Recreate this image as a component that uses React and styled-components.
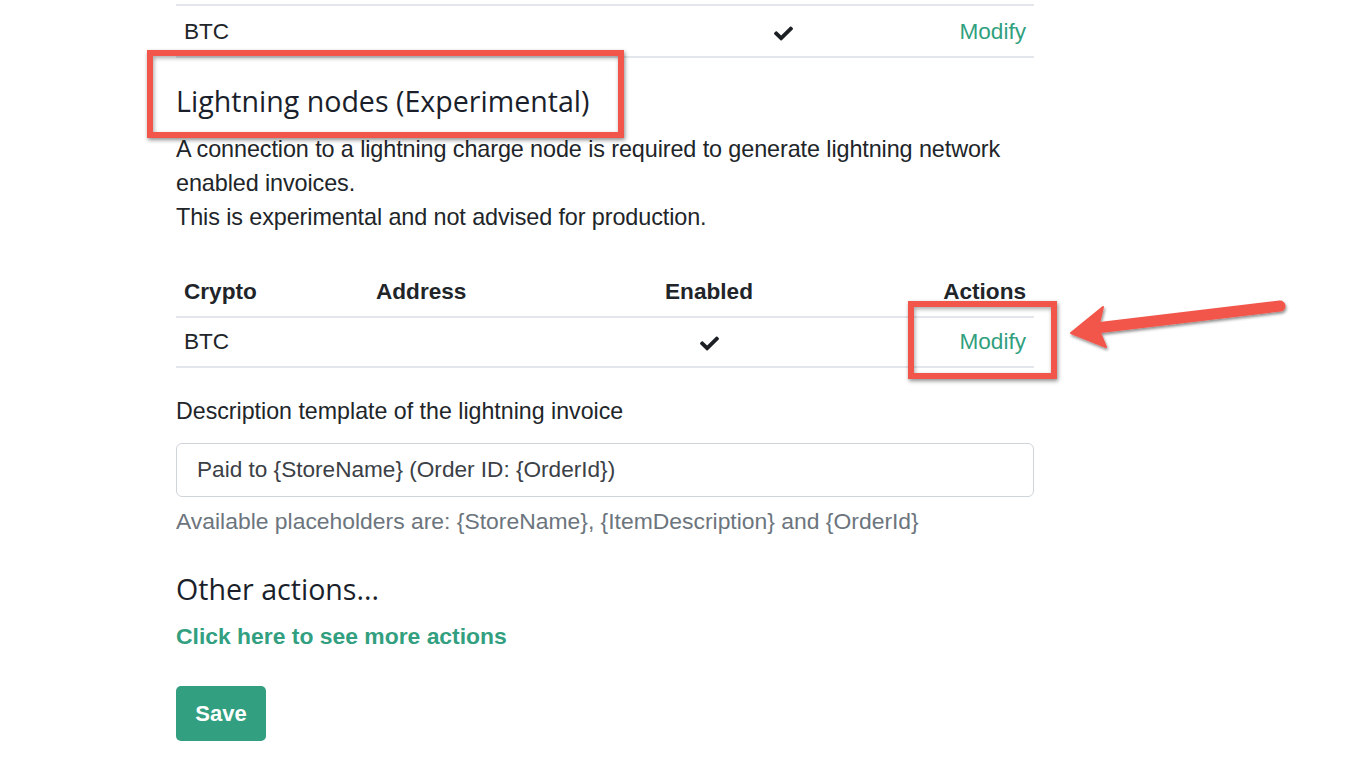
import React from 'react';
import styled, { createGlobalStyle } from 'styled-components';
import { FaCheck } from 'react-icons/fa';

const GlobalStyle = createGlobalStyle`
  html, body {
    margin: 0;
    padding: 0;
    background: #fff;
  }
  body {
    font-family: "Liberation Sans", Arial, sans-serif;
    color: #212529;
  }
`;

const Page = styled.div`
  position: relative;
  width: 1366px;
  height: 768px;
  overflow: hidden;
`;

const Content = styled.div`
  width: 858px;
  margin-left: 176px;
  padding-top: 4px;
`;

const Table = styled.table`
  width: 100%;
  border-collapse: collapse;
  table-layout: fixed;
  font-size: 22.6px;
  margin-top: ${(p) => p.$top || 0}px;
`;

const Row = styled.tr`
  border-top: 2px solid #e3e6ea;
  border-bottom: 2px solid #e3e6ea;
  height: ${(p) => p.$height || 50}px;
`;

const HeadRow = styled.tr`
  height: 51px;
`;

const Th = styled.th`
  padding: 0 8px;
  font-weight: 700;
  text-align: ${(p) => p.$align || 'left'};
  vertical-align: middle;
  padding-top: 2px;
`;

const Td = styled.td`
  position: relative;
  padding: ${(p) => p.$pt || 0}px 8px 0;
  text-align: ${(p) => p.$align || 'left'};
  vertical-align: middle;
`;

const Link = styled.a`
  color: #329f80;
  text-decoration: none;
  font-weight: ${(p) => (p.$bold ? 700 : 400)};
`;

const Check = styled(FaCheck)`
  width: 19px;
  height: 19px;
  color: #1c1f24;
  vertical-align: middle;
`;

const HeadingWrap = styled.div`
  position: relative;
  margin-top: ${(p) => p.$top}px;
`;

const Heading = styled.h3`
  margin: 0;
  font-family: "Open Sans", sans-serif;
  font-weight: 400;
  font-size: 28.6px;
  line-height: 36px;
  color: #1a1f2b;
`;

const Callout = styled.div`
  position: absolute;
  left: ${(p) => p.$left}px;
  top: ${(p) => p.$top}px;
  width: ${(p) => p.$width}px;
  height: ${(p) => p.$height}px;
  box-sizing: border-box;
  border: 6px solid #f2554a;
  box-shadow: 1px 2px 4px rgba(0, 0, 0, 0.45), inset 1px 2px 4px rgba(0, 0, 0, 0.35);
  pointer-events: none;
`;

const Paragraph = styled.p`
  margin: 13px 0 0;
  font-size: 23.4px;
  line-height: 34px;
  letter-spacing: -0.1px;
`;

const Label = styled.label`
  display: block;
  margin-top: 28px;
  font-size: 23.2px;
  line-height: 30px;
`;

const Input = styled.input`
  display: block;
  box-sizing: border-box;
  width: 100%;
  height: 54px;
  margin-top: 17px;
  padding: 0 20px;
  border: 1.5px solid #cfd4da;
  border-radius: 6px;
  font-family: "Liberation Sans", Arial, sans-serif;
  font-size: 22.6px;
  color: #3b4046;
  outline: none;
`;

const Hint = styled.div`
  margin-top: 9px;
  font-size: 22.9px;
  line-height: 30px;
  color: #6c757d;
`;

const SubHeading = styled.h3`
  margin: 33px 0 0;
  font-family: "Open Sans", sans-serif;
  font-weight: 400;
  font-size: 28.6px;
  line-height: 40px;
  color: #1a1f2b;
`;

const LinkLine = styled.div`
  margin-top: 12px;
  font-size: 22.9px;
  line-height: 30px;
`;

const SaveButton = styled.button`
  display: block;
  margin-top: 35px;
  width: 90px;
  height: 55px;
  border: none;
  border-radius: 5px;
  background: #329f80;
  color: #fff;
  font-family: "Liberation Sans", Arial, sans-serif;
  font-weight: 700;
  font-size: 22px;
`;

const Arrow = styled.svg`
  position: absolute;
  left: 1060px;
  top: 290px;
  width: 240px;
  height: 80px;
  overflow: visible;
`;

const App = () => (
  <Page>
    <GlobalStyle />
    <Content>
      <Table>
        <colgroup>
          <col style={{ width: 192 }} />
          <col style={{ width: 332 }} />
          <col style={{ width: 166 }} />
          <col style={{ width: 168 }} />
        </colgroup>
        <tbody>
          <Row $height={52}>
            <Td $pt={2}>BTC</Td>
            <Td />
            <Td $pt={2} $align="center"><Check /></Td>
            <Td $pt={2} $align="right"><Link href="#">Modify</Link></Td>
          </Row>
        </tbody>
      </Table>

      <HeadingWrap $top={25}>
        <Heading>Lightning nodes (Experimental)</Heading>
        <Callout $left={-29} $top={-33} $width={477} $height={88} />
      </HeadingWrap>

      <Paragraph>
        A connection to a lightning charge node is required to generate lightning network
        enabled invoices.
        <br />
        This is experimental and not advised for production.
      </Paragraph>

      <Table $top={32}>
        <colgroup>
          <col style={{ width: 192 }} />
          <col style={{ width: 252 }} />
          <col style={{ width: 178 }} />
          <col style={{ width: 236 }} />
        </colgroup>
        <thead>
          <HeadRow>
            <Th>Crypto</Th>
            <Th>Address</Th>
            <Th $align="center">Enabled</Th>
            <Th $align="right">Actions</Th>
          </HeadRow>
        </thead>
        <tbody>
          <Row>
            <Td>BTC</Td>
            <Td />
            <Td $align="center"><Check /></Td>
            <Td $align="right">
              <Link href="#">Modify</Link>
              <Callout $left={110} $top={-17} $width={149} $height={78} />
            </Td>
          </Row>
        </tbody>
      </Table>

      <Label htmlFor="desc">Description template of the lightning invoice</Label>
      <Input id="desc" defaultValue="Paid to {StoreName} (Order ID: {OrderId})" />
      <Hint>Available placeholders are: {'{StoreName}'}, {'{ItemDescription}'} and {'{OrderId}'}</Hint>

      <SubHeading>Other actions...</SubHeading>
      <LinkLine>
        <Link href="#" $bold>Click here to see more actions</Link>
      </LinkLine>

      <SaveButton type="button">Save</SaveButton>
    </Content>

    <Arrow viewBox="0 0 240 80">
      <defs>
        <filter id="arrowShadow" x="-20%" y="-50%" width="140%" height="200%">
          <feDropShadow dx="1" dy="2" stdDeviation="1.5" floodColor="#000" floodOpacity="0.45" />
        </filter>
      </defs>
      <g filter="url(#arrowShadow)" fill="#f2554a" stroke="#f2554a">
        <line x1="36" y1="38" x2="220" y2="16" strokeWidth="11" strokeLinecap="round" />
        <polygon points="11,43 43,17 38,38 46,57" strokeWidth="2" strokeLinejoin="round" />
      </g>
    </Arrow>
  </Page>
);

export default App;
